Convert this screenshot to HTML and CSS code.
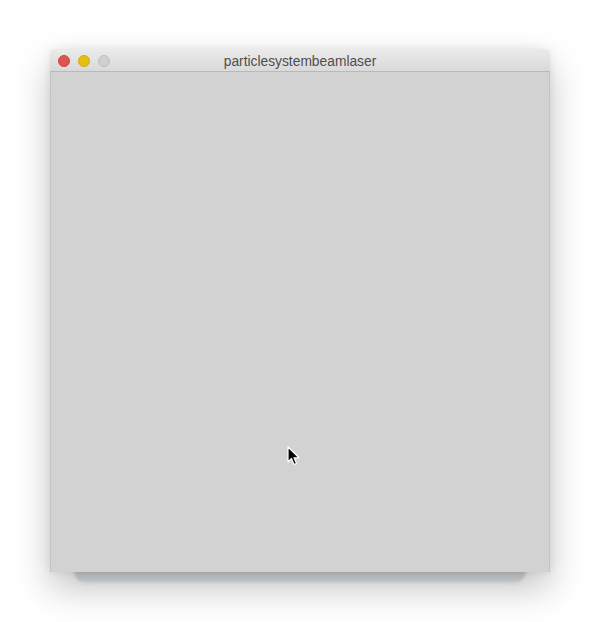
FILE: index.html
```html
<!DOCTYPE html>
<html>
<head>
<meta charset="utf-8">
<link rel="stylesheet" href="styles.css">
</head>
<body>
<div class="stage">
  <div class="window">
    <div class="titlebar">
      <div class="lights">
        <span class="light red"></span>
        <span class="light yellow"></span>
        <span class="light grey"></span>
      </div>
      <div class="title">particlesystembeamlaser</div>
    </div>
    <div class="content">
      <svg class="cursor" width="14" height="22" viewBox="0 0 14 22">
        <path d="M1 1 L1 16 L4.5 12.5 L7 18.5 L9.5 17.5 L7 11.8 L12 11.8 Z" fill="#000" stroke="#fff" stroke-width="1.2" stroke-linejoin="round"/>
      </svg>
    </div>
    <div class="underglow"></div>
  </div>
</div>
</body>
</html>
```
FILE: styles.css
```css
html, body {
  margin: 0;
  padding: 0;
  background: #ffffff;
  width: 600px;
  height: 622px;
  overflow: hidden;
}
.stage {
  padding: 49px 50px 0 50px;
}
.window {
  position: relative;
  z-index: 0;
  width: 500px;
  height: 523px;
  border-radius: 5px 5px 0 0;
  box-shadow: 0 16px 36px rgba(0,0,0,0.24), 0 0 10px rgba(0,0,0,0.08);
  display: flex;
  flex-direction: column;
}
.titlebar {
  position: relative;
  height: 22px;
  background: linear-gradient(#ebebeb, #d9d9d9);
  border-bottom: 1px solid #b9b9b9;
  border-radius: 5px 5px 0 0;
  display: flex;
  align-items: center;
  justify-content: center;
}
.lights {
  position: absolute;
  left: 8px;
  top: 6px;
  display: flex;
  gap: 8px;
}
.light {
  width: 12px;
  height: 12px;
  border-radius: 50%;
  box-sizing: border-box;
}
.red { background: #dd5450; border: 1px solid #c94641; }
.yellow { background: #e5bf14; border: 1px solid #d2a90e; }
.grey { background: #d1d0d1; border: 1px solid #bdbdbd; }
.title {
  font-family: "Helvetica Neue", "Liberation Sans", Arial, sans-serif;
  font-size: 13.8px;
  color: #4e4e4e;
  margin-top: 2px;
}
.content {
  position: relative;
  flex: 1;
  background: #d3d2d3;
  border-left: 1px solid #c4c4c4;
  border-right: 1px solid #c4c4c4;
}
.cursor {
  position: absolute;
  left: 236px;
  top: 374px;
}
.underglow {
  position: absolute;
  left: 24px;
  right: 24px;
  top: 521px;
  height: 15px;
  background: linear-gradient(#ab9f93 0, #ab9f93 2px, #aeb1b6 4px, #b5b9bd 9px, rgba(190,194,190,0.4) 13px, rgba(190,194,190,0) 15px);
  border-radius: 0 0 16px 16px;
  filter: blur(1.5px);
  z-index: -1;
}
```
